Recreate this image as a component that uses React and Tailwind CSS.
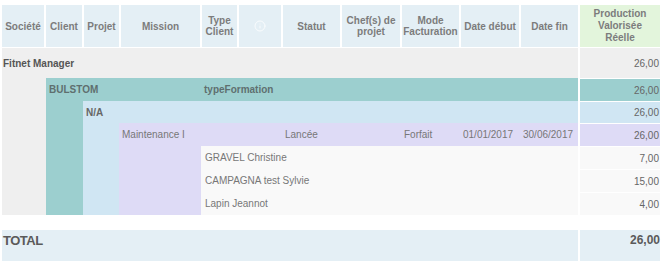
import { Info } from "lucide-react";

const headers = [
  { label: "Société", w: "w-[42px]" },
  { label: "Client", w: "w-[36px]" },
  { label: "Projet", w: "w-[35px]" },
  { label: "Mission", w: "w-[79px]" },
  { label: "Type Client", w: "w-[35px]" },
  { label: "info", w: "w-[42px]" },
  { label: "Statut", w: "w-[57px]" },
  { label: "Chef(s) de projet", w: "w-[58px]" },
  { label: "Mode Facturation", w: "w-[57px]" },
  { label: "Date début", w: "w-[58px]" },
  { label: "Date fin", w: "w-[57px]" },
];

const people = ["GRAVEL Christine", "CAMPAGNA test Sylvie", "Lapin Jeannot"];

const values = [
  { v: "26,00", cls: "h-[30px] bg-[#efefef]" },
  { v: "26,00", cls: "h-[22px] mt-[1px] bg-[#9ccfcf]" },
  { v: "26,00", cls: "h-[21px] mt-[1px] bg-[#d0e6f3]" },
  { v: "26,00", cls: "h-[22px] mt-[1px] bg-[#dedbf6]" },
  { v: "7,00", cls: "h-[22px] mt-[1px] bg-[#f9f9f9]" },
  { v: "15,00", cls: "h-[22px] mt-[1px] bg-[#f9f9f9]" },
  { v: "4,00", cls: "h-[22px] mt-[1px] bg-[#f9f9f9]" },
];

export default function App() {
  return (
    <div className="w-[670px] h-[268px] bg-white px-[2px] pt-[5px] font-['Liberation_Sans',Arial,sans-serif] text-[10px] text-[#777]">
      {/* header */}
      <div className="flex gap-[2px] h-[42px]">
        {headers.map((h) => (
          <div
            key={h.label}
            className={`${h.w} shrink-0 bg-[#e4eff5] flex items-center justify-center text-center font-bold leading-[11px] text-[#7c7c7c]`}
          >
            {h.label === "info" ? <Info size={12} color="#ffffff" strokeWidth={1.5} /> : h.label}
          </div>
        ))}
        <div className="w-[80px] shrink-0 bg-[#e3f5dc] flex items-center justify-center text-center font-bold leading-[12px] text-[#7c7c7c]">
          <span>
            Production
            <br />
            Valorisée
            <br />
            Réelle
          </span>
        </div>
      </div>

      {/* body */}
      <div className="flex gap-[2px] mt-[1px]">
        <div className="w-[576px] shrink-0 bg-[#efefef]">
          <div className="h-[30px] flex items-center pl-[1px] font-bold text-[#555]">Fitnet Manager</div>
          <div className="flex">
            <div className="w-[44px] shrink-0" />
            <div className="flex-1 bg-[#9ccfcf]">
              <div className="h-[23px] flex items-center font-bold text-[#5f6f6f]">
                <div className="w-[156px] pl-[3px]">BULSTOM</div>
                <div className="pl-[2px]">typeFormation</div>
              </div>
              <div className="flex">
                <div className="w-[37px] shrink-0" />
                <div className="flex-1 bg-[#d0e6f3]">
                  <div className="h-[22px] flex items-center pl-[3px] font-bold text-[#666]">N/A</div>
                  <div className="flex">
                    <div className="w-[36px] shrink-0" />
                    <div className="flex-1 bg-[#dedbf6]">
                      <div className="h-[23px] flex items-center">
                        <div className="w-[83px] shrink-0 pl-[3px]">Maintenance I</div>
                        <div className="w-[81px] shrink-0" />
                        <div className="w-[59px] shrink-0 pl-[2px]">Lancée</div>
                        <div className="w-[60px] shrink-0" />
                        <div className="w-[59px] shrink-0 pl-[2px]">Forfait</div>
                        <div className="w-[60px] shrink-0 pl-[2px]">01/01/2017</div>
                        <div className="pl-[2px]">30/06/2017</div>
                      </div>
                      <div className="flex">
                        <div className="w-[82px] shrink-0" />
                        <div className="flex-1 bg-[#f9f9f9]">
                          {people.map((p) => (
                            <div key={p} className="h-[23px] flex items-center pl-[4px]">
                              {p}
                            </div>
                          ))}
                        </div>
                      </div>
                    </div>
                  </div>
                </div>
              </div>
            </div>
          </div>
        </div>

        <div className="w-[80px] shrink-0 flex flex-col text-[#666]">
          {values.map((r, i) => (
            <div key={i} className={`${r.cls} flex items-center justify-end pr-[1px]`}>
              {r.v}
            </div>
          ))}
        </div>
      </div>

      {/* total */}
      <div className="flex gap-[2px] mt-[15px] h-[31px] font-bold text-[#5a5a5a]">
        <div className="w-[576px] shrink-0 bg-[#e4eff5] pl-[1px] pt-[1px] text-[13px] tracking-[-0.5px]">TOTAL</div>
        <div className="w-[80px] shrink-0 bg-[#e4eff5] text-right pt-[1px] text-[12px]">26,00</div>
      </div>
    </div>
  );
}
